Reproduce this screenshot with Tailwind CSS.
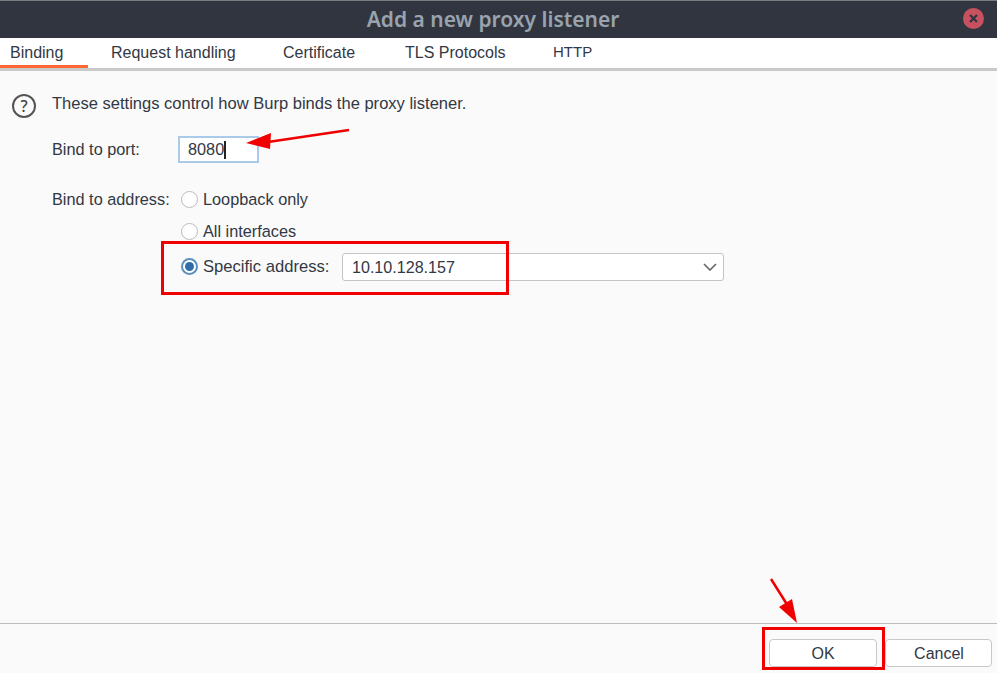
<!DOCTYPE html>
<html>
<head>
<meta charset="utf-8">
<script src="https://cdn.jsdelivr.net/npm/@tailwindcss/browser@4"></script>
</head>
<body class="m-0">
<div class="relative w-[997px] h-[673px] overflow-hidden flex flex-col bg-[#fafafa] text-[#323844] font-['Liberation_Sans',sans-serif] text-[16.3px]">
  <header class="relative h-[38px] shrink-0 bg-[#31353f] border-t border-[#7a7c80] flex items-center justify-center">
    <h1 class="font-['Noto_Sans',sans-serif] font-semibold text-[21px] text-[#99a3ad] pt-[1px] pr-[11px]">Add a new proxy listener</h1>
    <div class="absolute right-[13px] top-[7px] w-[21px] h-[21px] rounded-full bg-[#c8515f] flex items-center justify-center">
      <svg width="11" height="11" viewBox="0 0 11 11"><path d="M2 2l7 7M9 2l-7 7" stroke="#31353f" stroke-width="2.2"/></svg>
    </div>
  </header>
  <nav class="h-[33px] shrink-0 flex bg-white border-b-[3px] border-[#c9c9c9] text-[16px]">
    <div class="w-[88px] h-[30px] pl-[10px] pt-[3px] border-b-[3px] border-[#ff6633]">Binding</div>
    <div class="pl-[23px] pt-[3px] w-[195px]">Request handling</div>
    <div class="pt-[3px] w-[122px]">Certificate</div>
    <div class="pt-[3px] w-[148px]">TLS Protocols</div>
    <div class="pt-[3px] text-[15px]">HTTP</div>
  </nav>
  <main class="flex-1 flex flex-col pl-[12px] pt-[23px]">
    <div class="flex items-start gap-[16px]">
      <div class="w-[24px] h-[24px] rounded-full border-2 border-[#555] flex items-center justify-center text-[16px] font-medium text-[#444] font-['Noto_Sans',sans-serif]">?</div>
      <p class="leading-[18px] mt-[1px] text-[16.55px]">These settings control how Burp binds the proxy listener.</p>
    </div>
    <div class="flex items-center pl-[40px] mt-[18px]">
      <span class="w-[126px]">Bind to port:</span>
      <div class="w-[81px] h-[27px] bg-white border-2 border-[#aacbe8] pl-[8px] flex items-center"><span>8080</span><span class="w-[1.5px] h-[18px] bg-[#222]"></span></div>
    </div>
    <div class="flex pl-[40px] mt-[26px]">
      <span class="w-[129px] leading-[20px]">Bind to address:</span>
      <div class="flex flex-col">
        <label class="flex items-center gap-[5px] h-[20px]"><span class="w-[17px] h-[17px] rounded-full border border-[#bbb] bg-white"></span>Loopback only</label>
        <label class="flex items-center gap-[5px] h-[20px] mt-[12px]"><span class="w-[17px] h-[17px] rounded-full border border-[#bbb] bg-white"></span>All interfaces</label>
        <div class="flex items-center mt-[12px]">
          <label class="flex items-center gap-[5px] w-[161px] text-[16.6px]"><span class="w-[17px] h-[17px] rounded-full border-2 border-[#5b8fc0] bg-white flex items-center justify-center"><span class="w-[9px] h-[9px] rounded-full bg-[#2f6ca8]"></span></span>Specific address:</label>
          <div class="w-[382px] h-[28px] bg-white border border-[#c4c4c4] rounded-[3px] flex items-center justify-between pl-[9px] pr-[6px] text-[16.1px]">
            <span>10.10.128.157</span>
            <svg width="14" height="8" viewBox="0 0 14 8" fill="none"><path d="M1 1l6 6 6-6" stroke="#666" stroke-width="1.6"/></svg>
          </div>
        </div>
      </div>
    </div>
  </main>
  <footer class="h-[50px] shrink-0 border-t border-[#bdbdbd] flex justify-end items-start gap-[8px] pt-[15px] pr-[5px] text-[16px]">
    <button class="w-[108px] h-[28px] pt-[1px] bg-white border border-[#c8c8c8] rounded-[4px]">OK</button>
    <button class="w-[107px] h-[28px] pt-[1px] pl-[1px] bg-white border border-[#c8c8c8] rounded-[4px]">Cancel</button>
  </footer>
  <div class="absolute left-[161px] top-[241px] w-[348px] h-[54px] border-[3px] border-[#f00000]"></div>
  <div class="absolute left-[762px] top-[627px] w-[123px] h-[43px] border-[3px] border-[#f00000]"></div>
  <svg class="absolute left-0 top-0 pointer-events-none" width="997" height="673" fill="#f00000">
    <path d="M349 130L268 142" stroke="#f00000" stroke-width="2.5"/>
    <path d="M246 143L271 133L270 149Z"/>
    <path d="M771 579L788 606" stroke="#f00000" stroke-width="2.5"/>
    <path d="M797 623L779 607L792 599Z"/>
  </svg>
</div>
</body>
</html>
